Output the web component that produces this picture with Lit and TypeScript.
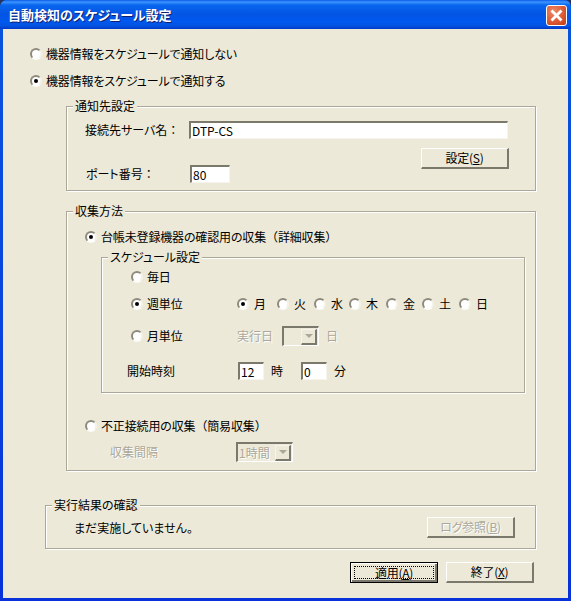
import { LitElement, html, css } from "lit";
import { customElement } from "lit/decorators.js";

const days = ["月", "火", "水", "木", "金", "土", "日"];

@customElement("app-root")
export class AppRoot extends LitElement {
  static styles = css`
    :host { display: block; width: 571px; height: 601px; background: #26335f; font: 12px/16px "Noto Sans CJK JP", "Liberation Sans", sans-serif; color: #000; }
    * { box-sizing: border-box; }
    .window { width: 571px; height: 601px; display: flex; flex-direction: column; background: linear-gradient(180deg, #0855dd 0, #0a45de 300px, #0831d9 100%); border-radius: 7px 7px 0 0; overflow: hidden; }
    .title { height: 29px; flex: none; display: flex; align-items: center; justify-content: space-between; padding: 0 4px 0 8px;
      background: linear-gradient(180deg, #0a5ae6 0, #3d95ff 2px, #0a66ee 5px, #0355e4 14px, #0058ee 22px, #0353e0 26px, #0238c8 29px); }
    .title-text { color: #fff; font-weight: 700; font-size: 13px; text-shadow: 1px 1px 0 #0f1e6e; margin-top: 1px; font-feature-settings: "palt"; white-space: nowrap; }
    .close { width: 21px; height: 21px; border: 1px solid #fff; border-radius: 3px; background: radial-gradient(circle at 35% 30%, #ee8a68, #dc5a34 55%, #c23a17); display: flex; align-items: center; justify-content: center; margin-top: 1px; }
    .client { flex: 1; margin: 0 3px 3px; background: #ece9d8; padding: 17px 0 0 27px; }
    .opt { display: flex; align-items: center; height: 16px; gap: 4px; white-space: nowrap; font-feature-settings: "palt"; letter-spacing: -.15px; }
    .fw { font-feature-settings: normal; }
    .radio { width: 12px; height: 12px; flex: none; border-radius: 50%; background: #fff; border: 2px solid; border-color: #8e8b7e #f4f2e8 #fdfcf8 #8e8b7e; display: flex; align-items: center; justify-content: center; }
    .radio.on::after { content: ""; width: 4px; height: 4px; border-radius: 50%; background: #000; }
    .o2 { margin-top: 11px; }
    .group { position: relative; border: 1px solid #aca899; box-shadow: 1px 1px 0 #fff, inset 1px 1px 0 #fff; }
    .legend { position: absolute; top: -9px; left: 6px; background: #ece9d8; padding: 0 2px; white-space: nowrap; font-feature-settings: "palt"; }
    .g1 { margin: 17px 0 0 36px; width: 470px; height: 85px; padding: 14px 0 0 18px; }
    .row { display: flex; align-items: center; white-space: nowrap; font-feature-settings: "palt"; }
    .lbl-server { width: 104px; }
    .lbl-port { width: 105px; padding-left: 1px; }
    .input { height: 18px; background: #fff; border-style: solid; border-width: 2px 1px 1px 2px; border-color: #7b796c #f6f4ec #f6f4ec #7b796c; padding: 0 0 0 1px; font: inherit; line-height: 14px; color: #000; display: block; outline: none; border-radius: 0; }
    .server { width: 319px; }
    .port { width: 40px; }
    .btn-row { display: flex; justify-content: flex-end; padding-right: 26px; margin-top: 9px; margin-bottom: -4px; }
    .btn { width: 88px; height: 21px; background: #ece9d8; display: flex; align-items: center; justify-content: center; border-style: solid; border-width: 1px 2px 2px 1px; border-color: #fff #7b796c #7b796c #fff; white-space: nowrap; font: inherit; font-feature-settings: "palt"; letter-spacing: -.3px; padding: 0; color: #000; }
    .btn u { text-underline-offset: 1px; }
    .btn.dis { color: #aca899; text-shadow: 1px 1px 0 #fff; }
    .btn.def { border: 1px solid #000; position: relative; box-shadow: inset 1px 1px 0 #fff, inset -2px -2px 0 #7b796c; }
    .btn.def::after { content: ""; position: absolute; inset: 3px; border: 1px dotted #000; }
    .g2 { margin: 20px 0 0 36px; width: 470px; height: 260px; padding: 17px 0 0 18px; }
    .g3 { margin: 12px 0 0 16px; width: 424px; height: 136px; padding: 11px 0 0 29px; }
    .sched-row { display: flex; align-items: center; height: 16px; white-space: nowrap; }
    .sched-lbl { width: 106px; }
    .r-week { margin-top: 11px; }
    .r-month { margin-top: 16px; }
    .r-time { margin-top: 18px; height: 18px; margin-left: -4px; }
    .time-lbl { width: 111px; font-feature-settings: "palt"; }
    .time { width: 26px; }
    .t-unit { width: 37px; padding-left: 7px; }
    .days { display: grid; grid-template-columns: 40px 37px 35px 37px 36px 37px auto; }
    .days .opt { gap: 5px; }
    .dis-t { color: #aca899; text-shadow: 1px 1px 0 #fff; }
    .combo { height: 20px; border-style: solid; border-width: 2px 1px 1px 2px; border-color: #7b796c #fff #fff #7b796c; background: #ece9d8; display: flex; justify-content: flex-end; align-items: center; padding-left: 1px; }
    .combo span { flex: 1; color: #aca899; text-shadow: 1px 1px 0 #fff; }
    .arrow { width: 16px; height: 16px; flex: none; margin-right: 1px; background: #ece9d8; border-style: solid; border-width: 1px 2px 2px 1px; border-color: #f6f4ec #7b796c #7b796c #f6f4ec; display: flex; align-items: center; justify-content: center; }
    .arrow::after { content: ""; border: 4px solid transparent; border-top: 4px solid #aca899; border-bottom: 0; }
    .c-day { width: 37px; }
    .exec { width: 45px; }
    .unit-day { margin-left: 7px; }
    .o-bad { margin-top: 25px; }
    .interval { display: flex; align-items: center; margin: 8px 0 0 25px; }
    .int-lbl { width: 126px; }
    .c-int { width: 57px; }
    .g4 { margin: 34px 0 0 15px; width: 491px; height: 44px; display: flex; justify-content: space-between; padding: 11px 20px 0 28px; }
    .g4-t { margin-top: 3px; font-feature-settings: "palt"; }
    .foot { display: flex; justify-content: flex-end; gap: 8px; padding-right: 34px; margin-top: 13px; }
  `;

  render() {
    return html`
      <div class="window">
        <div class="title">
          <div class="title-text">自動検知のスケジュール設定</div>
          <div class="close">
            <svg width="15" height="15" viewBox="0 0 15 15"><path d="M3.5 3.5 L11.5 11.5 M11.5 3.5 L3.5 11.5" stroke="#fff" stroke-width="2.8" stroke-linecap="square" /></svg>
          </div>
        </div>
        <div class="client">
          <div class="opt"><span class="radio"></span>機器情報をスケジュールで通知しない</div>
          <div class="opt o2"><span class="radio on"></span>機器情報をスケジュールで通知する</div>

          <div class="group g1">
            <div class="legend">通知先設定</div>
            <div class="row"><span class="lbl-server">接続先サーバ名<span class="fw">：</span></span><input class="input server" value="DTP-CS" /></div>
            <div class="btn-row"><button class="btn">設定(<u>S</u>)</button></div>
            <div class="row"><span class="lbl-port">ポート番号<span class="fw">：</span></span><input class="input port" value="80" /></div>
          </div>

          <div class="group g2">
            <div class="legend">収集方法</div>
            <div class="opt"><span class="radio on"></span><span>台帳未登録機器の確認用の収集<span class="fw">（</span>詳細収集<span class="fw">）</span></span></div>
            <div class="group g3">
              <div class="legend">スケジュール設定</div>
              <div class="sched-row"><div class="opt"><span class="radio"></span>毎日</div></div>
              <div class="sched-row r-week">
                <div class="opt sched-lbl"><span class="radio on"></span>週単位</div>
                <div class="days">
                  ${days.map((d, i) => html`<div class="opt"><span class="radio ${i === 0 ? "on" : ""}"></span>${d}</div>`)}
                </div>
              </div>
              <div class="sched-row r-month">
                <div class="opt sched-lbl"><span class="radio"></span>月単位</div>
                <span class="exec dis-t">実行日</span>
                <div class="combo c-day"><div class="arrow"></div></div>
                <span class="unit-day dis-t">日</span>
              </div>
              <div class="sched-row r-time">
                <span class="time-lbl">開始時刻</span>
                <input class="input time" value="12" />
                <span class="t-unit">時</span>
                <input class="input time" value="0" />
                <span class="unit-day">分</span>
              </div>
            </div>
            <div class="opt o-bad"><span class="radio"></span><span>不正接続用の収集<span class="fw">（</span>簡易収集<span class="fw">）</span></span></div>
            <div class="interval">
              <span class="int-lbl dis-t">収集間隔</span>
              <div class="combo c-int"><span>1時間</span><div class="arrow"></div></div>
            </div>
          </div>

          <div class="group g4">
            <div class="legend">実行結果の確認</div>
            <div class="g4-t">まだ実施していません。</div>
            <button class="btn dis">ログ参照(<u>B</u>)</button>
          </div>

          <div class="foot">
            <button class="btn def">適用(<u>A</u>)</button>
            <button class="btn">終了(<u>X</u>)</button>
          </div>
        </div>
      </div>
    `;
  }
}
